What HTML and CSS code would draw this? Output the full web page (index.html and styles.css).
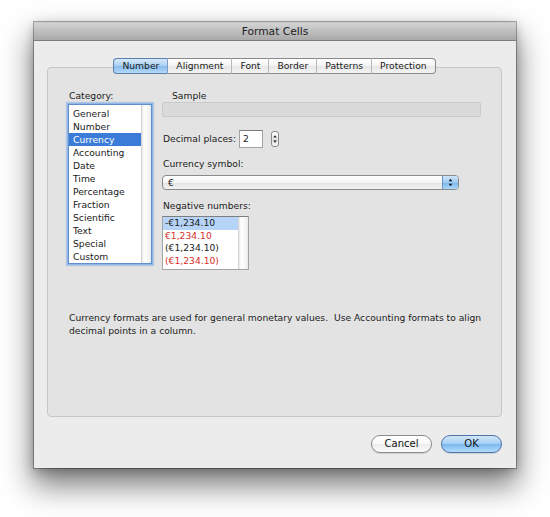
FILE: index.html
```html
<!DOCTYPE html>
<html>
<head>
<meta charset="utf-8">
<title>Format Cells</title>
<link rel="stylesheet" href="styles.css">
</head>
<body>
<div class="stage">
  <div class="window">
    <div class="titlebar">Format Cells</div>
    <div class="content">
      <div class="tabbox">
        <div class="tabs">
          <div class="tab selected">Number</div>
          <div class="tab">Alignment</div>
          <div class="tab">Font</div>
          <div class="tab">Border</div>
          <div class="tab">Patterns</div>
          <div class="tab">Protection</div>
        </div>
        <div class="panel">
          <div class="columns">
            <div class="leftcol">
              <div class="label cat-label">Category:</div>
              <div class="listbox catlist">
                <div class="items">
                  <div class="item">General</div>
                  <div class="item">Number</div>
                  <div class="item sel">Currency</div>
                  <div class="item">Accounting</div>
                  <div class="item">Date</div>
                  <div class="item">Time</div>
                  <div class="item">Percentage</div>
                  <div class="item">Fraction</div>
                  <div class="item">Scientific</div>
                  <div class="item">Text</div>
                  <div class="item">Special</div>
                  <div class="item">Custom</div>
                </div>
                <div class="track"></div>
              </div>
            </div>
            <div class="rightcol">
              <div class="label sample-label">Sample</div>
              <div class="samplebox"></div>
              <div class="decrow">
                <span class="label">Decimal places:</span>
                <div class="numinput">2</div>
                <div class="stepper">
                  <svg width="8" height="16" viewBox="0 0 8 16"><path d="M4 4.2 L5.8 6.6 L2.2 6.6 Z" fill="#222"/><path d="M4 11.8 L5.8 9.4 L2.2 9.4 Z" fill="#222"/></svg>
                </div>
              </div>
              <div class="label cur-label">Currency symbol:</div>
              <div class="select">
                <span class="selvalue">€</span>
                <span class="selarrow">
                  <svg width="16" height="13" viewBox="0 0 16 13"><path d="M8 2.6 L10 5.2 L6 5.2 Z" fill="#1a1a1a"/><path d="M8 10.4 L10 7.8 L6 7.8 Z" fill="#1a1a1a"/></svg>
                </span>
              </div>
              <div class="label neg-label">Negative numbers:</div>
              <div class="listbox neglist">
                <div class="items">
                  <div class="nitem nsel">-€1,234.10</div>
                  <div class="nitem red">€1,234.10</div>
                  <div class="nitem">(€1,234.10)</div>
                  <div class="nitem red">(€1,234.10)</div>
                </div>
                <div class="track"></div>
              </div>
            </div>
          </div>
          <p class="desc">Currency formats are used for general monetary values.&nbsp; Use Accounting formats to align decimal points in a column.</p>
        </div>
      </div>
      <div class="buttons">
        <div class="btn cancel">Cancel</div>
        <div class="btn ok">OK</div>
      </div>
    </div>
  </div>
</div>
</body>
</html>
```

FILE: styles.css
```css
* { box-sizing: border-box; }
html, body { margin: 0; padding: 0; background: #ffffff; }
body {
  font-family: "DejaVu Sans", "Liberation Sans", sans-serif;
  font-size: 9.2px;
  color: #1a1a1a;
  min-height: 517px;
}
.stage { padding: 22px 0 60px 34px; }
.window {
  width: 482px;
  height: 446px;
  background: #ececec;
  display: flex;
  flex-direction: column;
  box-shadow: 0 0 0 1px rgba(0,0,0,0.3), 0 16px 28px 2px rgba(0,0,0,0.5), 0 3px 10px rgba(0,0,0,0.25);
}
.titlebar {
  height: 19px;
  line-height: 18px;
  text-align: center;
  font-size: 10.7px;
  color: #222;
  background: linear-gradient(#d3d3d3, #bababa 60%, #a9a9a9);
  border-top: 1px solid #c8c8c8;
  border-bottom: 1px solid #7c7c7c;
  flex: none;
}
.content {
  flex: 1;
  display: flex;
  flex-direction: column;
  padding: 17px 14px 0 13px;
}
.tabbox { display: flex; flex-direction: column; }
.tabs {
  display: flex;
  justify-content: center;
  position: relative;
  z-index: 1;
  height: 16px;
}
.tab {
  height: 16px;
  line-height: 14px;
  padding: 0 8px;
  background: linear-gradient(#ffffff, #f3f3f3 50%, #e6e6e6 51%, #f4f4f4);
  border-top: 1px solid #8a8a8a;
  border-bottom: 1px solid #8a8a8a;
  border-right: 1px solid #b8b8b8;
  color: #1a1a1a;
}
.tab:first-child { border-left: 1px solid #8a8a8a; border-radius: 4px 0 0 4px; }
.tab:last-child { border-right: 1px solid #8a8a8a; border-radius: 0 4px 4px 0; }
.tab.selected {
  background: linear-gradient(#d6e9fb, #a9d0f4 50%, #86bbee 51%, #b4dafa);
  border-color: #5b7fb0;
  border-right-color: #7e9dc6;
}
.panel {
  margin-top: -7px;
  height: 350px;
  background: #e3e3e3;
  border: 1px solid #c6c6c6;
  border-radius: 4px;
  padding: 22px 20px 0 20px;
}
.columns { display: flex; gap: 10px; }
.leftcol { width: 84px; display: flex; flex-direction: column; }
.rightcol { width: 319px; display: flex; flex-direction: column; }
.label { line-height: 12px; height: 12px; white-space: nowrap; color: #1c1c1c; }
.cat-label { padding-left: 1px; margin-bottom: 2px; }
.listbox {
  display: flex;
  background: #fff;
}
.items { flex: 1; }
.catlist {
  height: 160px;
  border: 1px solid #5f8fcc;
  box-shadow: 0 0 0 1px #92b7e4, 0 0 1px 2px rgba(140,180,230,0.6);
  padding-top: 2px;
}
.item {
  height: 13px;
  line-height: 13px;
  padding-left: 4px;
  white-space: nowrap;
}
.item.sel { background: #3c7cd9; color: #fff; }
.track {
  width: 10px;
  flex: none;
  background: linear-gradient(to right, #c4c4c4 0, #e4e4e4 1px, #ffffff 3px, #f6f6f6 7px, #e9e9e9 100%);
}
.catlist .track { margin-top: -2px; }
.sample-label { padding-left: 10px; }
.samplebox {
  height: 15px;
  background: #dadada;
  border: 1px solid #cacaca;
  border-radius: 2px;
}
.decrow {
  display: flex;
  align-items: center;
  margin-top: 13px;
  height: 18px;
}
.decrow .label { padding-left: 1px; }
.numinput {
  width: 24px;
  height: 18px;
  margin-left: 3px;
  background: #fff;
  border: 1px solid #a3a3a3;
  border-top-color: #7b7b7b;
  line-height: 16px;
  padding-left: 3px;
}
.stepper {
  width: 8px;
  height: 16px;
  margin-left: 8px;
  border: 1px solid #8c8c8c;
  border-radius: 3px;
  background: linear-gradient(#ffffff, #ececec 50%, #dfdfdf 51%, #f6f6f6);
  position: relative;
  display: flex;
}
.stepper svg { position: absolute; left: -1px; top: -1px; }
.cur-label { margin-top: 10px; padding-left: 1px; }
.select {
  margin-top: 5px;
  width: 297px;
  height: 15px;
  display: flex;
  border: 1px solid #8a8a8a;
  border-radius: 4px;
  overflow: hidden;
  background: linear-gradient(#ffffff, #f4f4f4 50%, #e4e4e4 51%, #f2f2f2);
}
.selvalue { flex: 1; line-height: 13px; padding-left: 5px; }
.selarrow {
  width: 16px;
  flex: none;
  border-left: 1px solid #6d92c2;
  background: linear-gradient(#cfe6fb, #9ccbf3 50%, #79b5ef 51%, #acd8fb);
  display: flex;
}
.neg-label { margin-top: 10px; padding-left: 1px; }
.neglist {
  margin-top: 4px;
  width: 87px;
  height: 54px;
  border: 1px solid #a4a4a4;
  border-top-color: #7e7e7e;
}
.nitem {
  height: 12.6px;
  line-height: 12.6px;
  padding-left: 2px;
  white-space: nowrap;
}
.nitem.nsel { background: #b6d4f7; }
.nitem.red { color: #d5302a; }
.desc {
  margin: 41px 0 0 0;
  padding-left: 1px;
  line-height: 13px;
  width: 420px;
  color: #1c1c1c;
}
.buttons {
  display: flex;
  justify-content: flex-end;
  gap: 9px;
  margin-top: 18px;
  padding-right: 0;
}
.btn {
  width: 61px;
  height: 18px;
  line-height: 16px;
  text-align: center;
  border-radius: 9px;
  font-size: 10px;
  color: #111;
}
.cancel {
  border: 1px solid #8b8b8b;
  background: linear-gradient(#ffffff, #f8f8f8 50%, #ececec 51%, #fbfbfb);
  box-shadow: 0 1px 1px rgba(0,0,0,0.12);
}
.ok {
  border: 1px solid #4e74ad;
  background: linear-gradient(#d3e8fb, #a5cff5 48%, #7ab8f0 52%, #b3dcfc);
  box-shadow: 0 1px 1px rgba(0,0,0,0.12);
}
```
